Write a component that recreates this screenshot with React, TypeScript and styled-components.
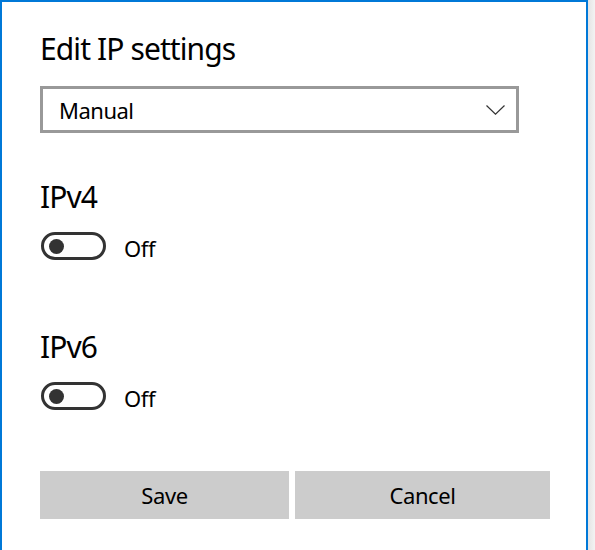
import React from "react";
import styled, { createGlobalStyle } from "styled-components";

const Global = createGlobalStyle`
  html, body { margin: 0; padding: 0; background: #ffffff; }
  body { font-family: "Segoe UI", "Noto Sans", "Open Sans", sans-serif; color: #000; overflow: hidden; }
`;

const Page = styled.div`
  width: 595px;
  height: 550px;
  overflow: hidden;
  background: linear-gradient(to right, #fff 0, #fff 588px, #e4e4e4 588px, #f3f3f3 595px);
`;

const Dialog = styled.div`
  box-sizing: border-box;
  width: 588px;
  height: 600px;
  border: 2px solid #0078d7;
  border-bottom: none;
  background: #fff;
  padding: 27px 36px 0 38px;
  display: flex;
  flex-direction: column;
`;

const Heading = styled.h2<{ $top?: number }>`
  margin: ${(p) => p.$top ?? 0}px 0 0 0;
  font-size: 30px;
  line-height: 40px;
  font-weight: 400;
  letter-spacing: -0.9px;
  color: #000;
`;

const Select = styled.div`
  box-sizing: border-box;
  margin: 17px 0 0 0;
  width: 479px;
  height: 47px;
  border: 3px solid #999;
  display: flex;
  align-items: center;
  justify-content: space-between;
  padding: 0 11px 0 16px;
  font-size: 22px;
  letter-spacing: -0.5px;
  color: #000;
`;

const ToggleRow = styled.div`
  margin: 15px 0 0 1px;
  display: flex;
  align-items: center;
  gap: 18px;
  height: 28px;
`;

const Track = styled.div`
  box-sizing: border-box;
  width: 65px;
  height: 28px;
  border: 3px solid #333;
  border-radius: 14px;
  display: flex;
  align-items: center;
  padding-left: 5px;
`;

const Knob = styled.div`
  width: 15px;
  height: 15px;
  border-radius: 50%;
  background: #333;
`;

const ToggleLabel = styled.span`
  font-size: 22px;
  letter-spacing: -0.4px;
  padding-top: 3px;
  color: #000;
`;

const Buttons = styled.div`
  margin: 61px 0 0 0;
  display: grid;
  grid-template-columns: 249px 255px;
  gap: 6px;
`;

const Button = styled.button`
  height: 48px;
  border: none;
  background: #cccccc;
  font-family: inherit;
  font-size: 22px;
  letter-spacing: -0.4px;
  color: #000;
  padding: 0;
`;

const Chevron = () => (
  <svg width="19" height="10" viewBox="0 0 19 10">
    <polyline points="0.5,0.5 9.5,9.2 18.5,0.5" fill="none" stroke="#333" strokeWidth="1.2" />
  </svg>
);

const Toggle = ({ label }: { label: string }) => (
  <ToggleRow>
    <Track>
      <Knob />
    </Track>
    <ToggleLabel>{label}</ToggleLabel>
  </ToggleRow>
);

export default function App() {
  return (
    <Page>
      <Global />
      <Dialog>
        <Heading>Edit IP settings</Heading>
        <Select>
          <span>Manual</span>
          <Chevron />
        </Select>
        <Heading $top={44}>IPv4</Heading>
        <Toggle label="Off" />
        <Heading $top={67}>IPv6</Heading>
        <Toggle label="Off" />
        <Buttons>
          <Button>Save</Button>
          <Button>Cancel</Button>
        </Buttons>
      </Dialog>
    </Page>
  );
}
